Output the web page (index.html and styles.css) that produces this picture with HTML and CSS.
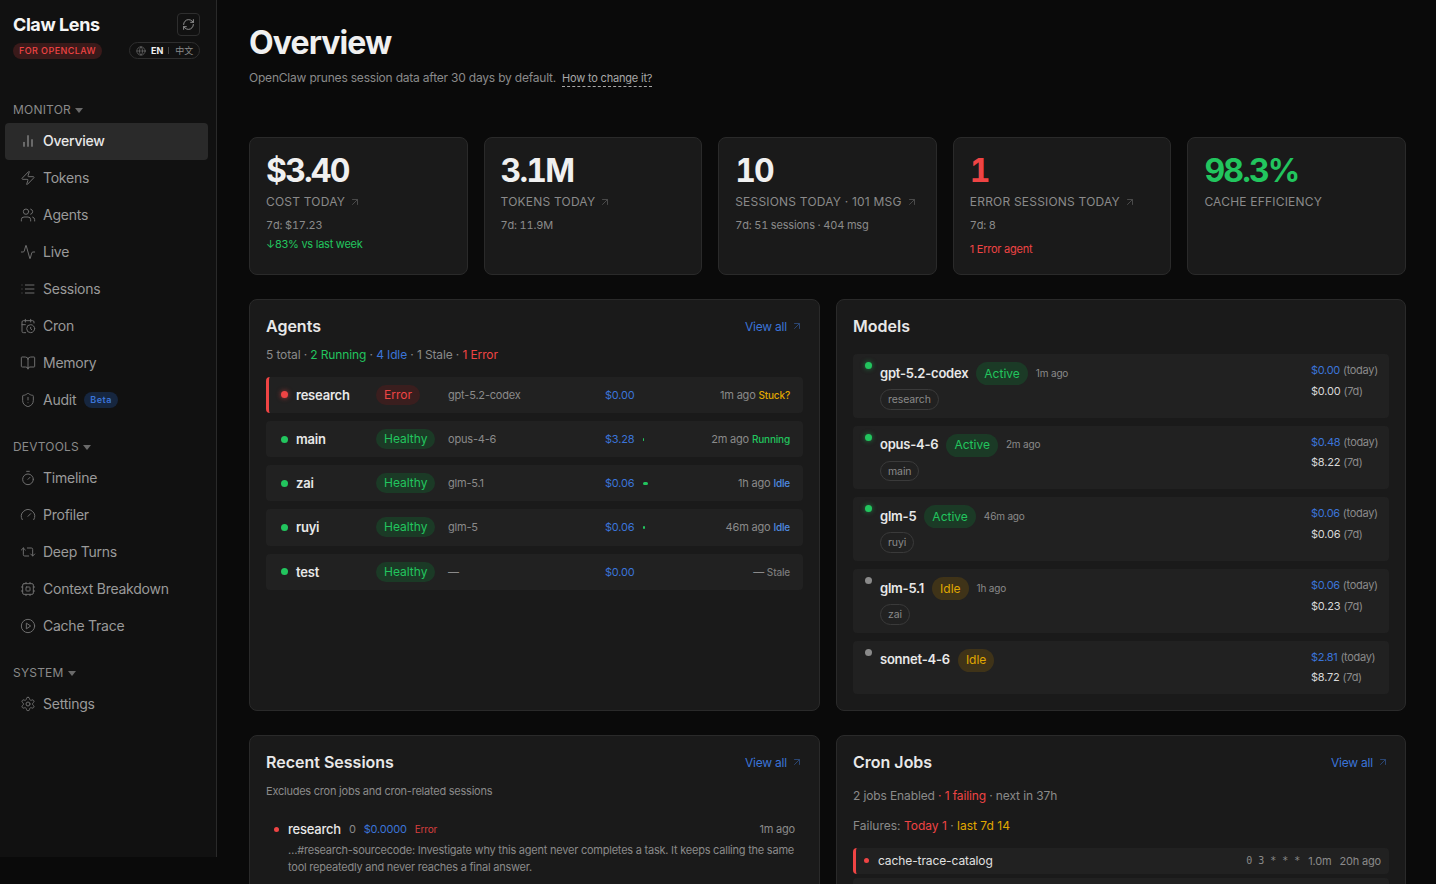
FILE: index.html
```html
<!DOCTYPE html>
<html lang="en">
<head>
<meta charset="utf-8">
<title>Claw Lens</title>
<link rel="stylesheet" href="styles.css">
</head>
<body>
<svg class="defs" aria-hidden="true">
  <symbol id="i-chart" viewBox="0 0 24 24"><path d="M18 20V10M12 20V4M6 20v-6"/></symbol>
  <symbol id="i-zap" viewBox="0 0 24 24"><path d="M4 14a1 1 0 0 1-.78-1.63l9.9-10.2a.5.5 0 0 1 .86.46l-1.92 6.02A1 1 0 0 0 13 10h7a1 1 0 0 1 .78 1.63l-9.9 10.2a.5.5 0 0 1-.86-.46l1.92-6.02A1 1 0 0 0 11 14z"/></symbol>
  <symbol id="i-users" viewBox="0 0 24 24"><path d="M16 21v-2a4 4 0 0 0-4-4H6a4 4 0 0 0-4 4v2"/><circle cx="9" cy="7" r="4"/><path d="M22 21v-2a4 4 0 0 0-3-3.87M16 3.13a4 4 0 0 1 0 7.75"/></symbol>
  <symbol id="i-activity" viewBox="0 0 24 24"><path d="M22 12h-2.48a2 2 0 0 0-1.93 1.46l-2.35 8.36a.25.25 0 0 1-.48 0L9.24 2.18a.25.25 0 0 0-.48 0l-2.35 8.36A2 2 0 0 1 4.49 12H2"/></symbol>
  <symbol id="i-list" viewBox="0 0 24 24"><path d="M3 12h.01M3 18h.01M3 6h.01M8 12h13M8 18h13M8 6h13"/></symbol>
  <symbol id="i-cal" viewBox="0 0 24 24"><path d="M21 7.5V6a2 2 0 0 0-2-2H5a2 2 0 0 0-2 2v14a2 2 0 0 0 2 2h3.5M16 2v4M8 2v4M3 10h5M17.5 17.5 16 16.3V14"/><circle cx="16" cy="16" r="6"/></symbol>
  <symbol id="i-book" viewBox="0 0 24 24"><path d="M12 7v14M3 18a1 1 0 0 1-1-1V4a1 1 0 0 1 1-1h5a4 4 0 0 1 4 4 4 4 0 0 1 4-4h5a1 1 0 0 1 1 1v13a1 1 0 0 1-1 1h-6a3 3 0 0 0-3 3 3 3 0 0 0-3-3z"/></symbol>
  <symbol id="i-shield" viewBox="0 0 24 24"><path d="M20 13c0 5-3.5 7.5-7.66 8.95a1 1 0 0 1-.67-.01C7.5 20.5 4 18 4 13V6a1 1 0 0 1 1-1c2 0 4.5-1.2 6.24-2.72a1.17 1.17 0 0 1 1.52 0C14.51 3.81 17 5 19 5a1 1 0 0 1 1 1zM12 8v4M12 16h.01"/></symbol>
  <symbol id="i-timer" viewBox="0 0 24 24"><path d="M10 2h4M12 14l3-3"/><circle cx="12" cy="14" r="8"/></symbol>
  <symbol id="i-gauge" viewBox="0 0 24 24"><path d="m12 14 4-4M3.34 19a10 10 0 1 1 17.32 0"/></symbol>
  <symbol id="i-repeat" viewBox="0 0 24 24"><path d="m2 9 3-3 3 3M13 18H7a2 2 0 0 1-2-2V6M22 15l-3 3-3-3M11 6h6a2 2 0 0 1 2 2v10"/></symbol>
  <symbol id="i-cpu" viewBox="0 0 24 24"><rect x="4" y="4" width="16" height="16" rx="2"/><rect x="9" y="9" width="6" height="6" rx="1"/><path d="M15 2v2M15 20v2M2 15h2M2 9h2M20 15h2M20 9h2M9 2v2M9 20v2"/></symbol>
  <symbol id="i-play" viewBox="0 0 24 24"><circle cx="12" cy="12" r="10"/><path d="M10 8l6 4-6 4z"/></symbol>
  <symbol id="i-gear" viewBox="0 0 24 24"><path d="M12.22 2h-.44a2 2 0 0 0-2 2v.18a2 2 0 0 1-1 1.73l-.43.25a2 2 0 0 1-2 0l-.15-.08a2 2 0 0 0-2.73.73l-.22.38a2 2 0 0 0 .73 2.73l.15.1a2 2 0 0 1 1 1.72v.51a2 2 0 0 1-1 1.74l-.15.09a2 2 0 0 0-.73 2.73l.22.38a2 2 0 0 0 2.73.73l.15-.08a2 2 0 0 1 2 0l.43.25a2 2 0 0 1 1 1.73V20a2 2 0 0 0 2 2h.44a2 2 0 0 0 2-2v-.18a2 2 0 0 1 1-1.73l.43-.25a2 2 0 0 1 2 0l.15.08a2 2 0 0 0 2.73-.73l.22-.39a2 2 0 0 0-.73-2.73l-.15-.08a2 2 0 0 1-1-1.74v-.5a2 2 0 0 1 1-1.74l.15-.09a2 2 0 0 0 .73-2.73l-.22-.38a2 2 0 0 0-2.73-.73l-.15.08a2 2 0 0 1-2 0l-.43-.25a2 2 0 0 1-1-1.73V4a2 2 0 0 0-2-2z"/><circle cx="12" cy="12" r="3"/></symbol>
  <symbol id="i-refresh" viewBox="0 0 24 24"><path d="M3 12a9 9 0 0 1 9-9 9.75 9.75 0 0 1 6.74 2.74L21 8M21 3v5h-5M21 12a9 9 0 0 1-9 9 9.75 9.75 0 0 1-6.74-2.74L3 16M8 16H3v5"/></symbol>
  <symbol id="i-globe" viewBox="0 0 24 24"><circle cx="12" cy="12" r="10"/><path d="M12 2a14.5 14.5 0 0 0 0 20 14.5 14.5 0 0 0 0-20M2 12h20"/></symbol>
  <symbol id="i-arrow" viewBox="0 0 24 24"><path d="M7 7h10v10M7 17 17 7"/></symbol>
</svg>
<div class="app">
  <aside class="sidebar">
    <div class="brand">
      <div class="brand-top">
        <span class="brand-name">Claw Lens</span>
        <button class="refresh"><svg class="ico ico-refresh"><use href="#i-refresh"/></svg></button>
      </div>
      <div class="brand-bottom">
        <span class="brand-tag">FOR OPENCLAW</span>
        <span class="lang"><svg class="ico ico-globe"><use href="#i-globe"/></svg><b>EN</b><i></i><span class="lang-zh">中文</span></span>
      </div>
    </div>
    <div class="nav-head nav-head-first">MONITOR<span class="caret"></span></div>
    <a class="nav active"><svg class="ico"><use href="#i-chart"/></svg>Overview</a>
    <a class="nav"><svg class="ico"><use href="#i-zap"/></svg>Tokens</a>
    <a class="nav"><svg class="ico"><use href="#i-users"/></svg>Agents</a>
    <a class="nav"><svg class="ico"><use href="#i-activity"/></svg>Live</a>
    <a class="nav"><svg class="ico"><use href="#i-list"/></svg>Sessions</a>
    <a class="nav"><svg class="ico"><use href="#i-cal"/></svg>Cron</a>
    <a class="nav"><svg class="ico"><use href="#i-book"/></svg>Memory</a>
    <a class="nav"><svg class="ico"><use href="#i-shield"/></svg>Audit<span class="beta">Beta</span></a>
    <div class="nav-head">DEVTOOLS<span class="caret"></span></div>
    <a class="nav"><svg class="ico"><use href="#i-timer"/></svg>Timeline</a>
    <a class="nav"><svg class="ico"><use href="#i-gauge"/></svg>Profiler</a>
    <a class="nav"><svg class="ico"><use href="#i-repeat"/></svg>Deep Turns</a>
    <a class="nav"><svg class="ico"><use href="#i-cpu"/></svg>Context Breakdown</a>
    <a class="nav"><svg class="ico"><use href="#i-play"/></svg>Cache Trace</a>
    <div class="nav-head">SYSTEM<span class="caret"></span></div>
    <a class="nav"><svg class="ico"><use href="#i-gear"/></svg>Settings</a>
  </aside>

  <main class="main">
    <h1>Overview</h1>
    <p class="subtitle">OpenClaw prunes session data after 30 days by default.<a class="help">How to change it?</a></p>

    <section class="stats">
      <div class="stat">
        <div class="stat-value">$3.40</div>
        <div class="stat-label">COST TODAY<svg class="ico-arrow"><use href="#i-arrow"/></svg></div>
        <div class="stat-sub">7d: $17.23</div>
        <div class="stat-delta green">↓83% vs last week</div>
      </div>
      <div class="stat">
        <div class="stat-value">3.1M</div>
        <div class="stat-label">TOKENS TODAY<svg class="ico-arrow"><use href="#i-arrow"/></svg></div>
        <div class="stat-sub">7d: 11.9M</div>
      </div>
      <div class="stat">
        <div class="stat-value">10</div>
        <div class="stat-label">SESSIONS TODAY · 101 MSG<svg class="ico-arrow"><use href="#i-arrow"/></svg></div>
        <div class="stat-sub">7d: 51 sessions · 404 msg</div>
      </div>
      <div class="stat">
        <div class="stat-value red">1</div>
        <div class="stat-label">ERROR SESSIONS TODAY<svg class="ico-arrow"><use href="#i-arrow"/></svg></div>
        <div class="stat-sub">7d: 8</div>
        <div class="stat-delta stat-delta-gap red">1 Error agent</div>
      </div>
      <div class="stat">
        <div class="stat-value green">98.3%</div>
        <div class="stat-label">CACHE EFFICIENCY</div>
      </div>
    </section>

    <section class="panels">
      <div class="panel panel-tall">
        <div class="panel-head"><h2>Agents</h2><a class="view-all">View all<svg class="ico-arrow"><use href="#i-arrow"/></svg></a></div>
        <div class="summary summary-agents">5 total · <span class="green">2 Running</span> · <span class="blue">4 Idle</span> · 1 Stale · <span class="red">1 Error</span></div>
        <div class="agents">
          <div class="agent agent-error">
            <span class="dot dot-red glow-red"></span><span class="agent-name">research</span>
            <span class="agent-pill"><span class="pill pill-red">Error</span></span>
            <span class="agent-model">gpt-5.2-codex</span><span class="agent-cost">$0.00</span>
            <span class="agent-bar"></span>
            <span class="agent-time">1m ago <b class="amber">Stuck?</b></span>
          </div>
          <div class="agent">
            <span class="dot dot-green"></span><span class="agent-name">main</span>
            <span class="agent-pill"><span class="pill pill-green">Healthy</span></span>
            <span class="agent-model">opus-4-6</span><span class="agent-cost">$3.28</span>
            <span class="agent-bar"><span class="bar bar-1"></span></span>
            <span class="agent-time">2m ago <b class="green">Running</b></span>
          </div>
          <div class="agent">
            <span class="dot dot-green"></span><span class="agent-name">zai</span>
            <span class="agent-pill"><span class="pill pill-green">Healthy</span></span>
            <span class="agent-model">glm-5.1</span><span class="agent-cost">$0.06</span>
            <span class="agent-bar"><span class="bar bar-5"></span></span>
            <span class="agent-time">1h ago <b class="blue-soft">Idle</b></span>
          </div>
          <div class="agent">
            <span class="dot dot-green"></span><span class="agent-name">ruyi</span>
            <span class="agent-pill"><span class="pill pill-green">Healthy</span></span>
            <span class="agent-model">glm-5</span><span class="agent-cost">$0.06</span>
            <span class="agent-bar"><span class="bar bar-2"></span></span>
            <span class="agent-time">46m ago <b class="blue-soft">Idle</b></span>
          </div>
          <div class="agent">
            <span class="dot dot-green"></span><span class="agent-name">test</span>
            <span class="agent-pill"><span class="pill pill-green">Healthy</span></span>
            <span class="agent-model">—</span><span class="agent-cost">$0.00</span>
            <span class="agent-bar"></span>
            <span class="agent-time">— <b class="stale">Stale</b></span>
          </div>
        </div>
      </div>

      <div class="panel panel-tall">
        <div class="panel-head"><h2>Models</h2></div>
        <div class="models">
          <div class="model">
            <span class="dot dot-green glow-green"></span>
            <div class="model-main">
              <div class="model-line"><span class="model-name">gpt-5.2-codex</span><span class="pill pill-lg pill-green">Active</span><span class="model-ago">1m ago</span></div>
              <span class="chip">research</span>
            </div>
            <div class="model-cost"><div><span class="blue">$0.00</span> <span class="muted">(today)</span></div><div>$0.00 <span class="muted">(7d)</span></div></div>
          </div>
          <div class="model">
            <span class="dot dot-green glow-green"></span>
            <div class="model-main">
              <div class="model-line"><span class="model-name">opus-4-6</span><span class="pill pill-lg pill-green">Active</span><span class="model-ago">2m ago</span></div>
              <span class="chip">main</span>
            </div>
            <div class="model-cost"><div><span class="blue">$0.48</span> <span class="muted">(today)</span></div><div>$8.22 <span class="muted">(7d)</span></div></div>
          </div>
          <div class="model">
            <span class="dot dot-green glow-green"></span>
            <div class="model-main">
              <div class="model-line"><span class="model-name">glm-5</span><span class="pill pill-lg pill-green">Active</span><span class="model-ago">46m ago</span></div>
              <span class="chip">ruyi</span>
            </div>
            <div class="model-cost"><div><span class="blue">$0.06</span> <span class="muted">(today)</span></div><div>$0.06 <span class="muted">(7d)</span></div></div>
          </div>
          <div class="model">
            <span class="dot dot-gray"></span>
            <div class="model-main">
              <div class="model-line"><span class="model-name">glm-5.1</span><span class="pill pill-lg pill-amber">Idle</span><span class="model-ago">1h ago</span></div>
              <span class="chip">zai</span>
            </div>
            <div class="model-cost"><div><span class="blue">$0.06</span> <span class="muted">(today)</span></div><div>$0.23 <span class="muted">(7d)</span></div></div>
          </div>
          <div class="model">
            <span class="dot dot-gray"></span>
            <div class="model-main">
              <div class="model-line"><span class="model-name">sonnet-4-6</span><span class="pill pill-lg pill-amber">Idle</span></div>
            </div>
            <div class="model-cost"><div><span class="blue">$2.81</span> <span class="muted">(today)</span></div><div>$8.72 <span class="muted">(7d)</span></div></div>
          </div>
        </div>
      </div>

      <div class="panel">
        <div class="panel-head"><h2>Recent Sessions</h2><a class="view-all">View all<svg class="ico-arrow"><use href="#i-arrow"/></svg></a></div>
        <div class="summary-small">Excludes cron jobs and cron-related sessions</div>
        <div class="session">
          <div class="session-line">
            <span class="dot dot-small dot-red"></span>
            <span class="session-name">research</span><span class="session-count">0</span><span class="session-cost">$0.0000</span><span class="session-err">Error</span>
            <span class="session-time">1m ago</span>
          </div>
          <p class="session-text">…#research-sourcecode: Investigate why this agent never completes a task. It keeps calling the same tool repeatedly and never reaches a final answer.</p>
        </div>
      </div>

      <div class="panel">
        <div class="panel-head"><h2>Cron Jobs</h2><a class="view-all">View all<svg class="ico-arrow"><use href="#i-arrow"/></svg></a></div>
        <div class="summary summary-cron">2 jobs Enabled <span class="red">· 1 failing</span> · next in 37h</div>
        <div class="summary summary-fail">Failures: <span class="red">Today 1</span> · <span class="amber">last 7d 14</span></div>
        <div class="cron cron-error">
          <span class="dot dot-small dot-red"></span><span class="cron-name">cache-trace-catalog</span>
          <span class="cron-sched">0 3 * * *</span><span class="cron-dur">1.0m</span><span class="cron-ago">20h ago</span>
        </div>
        <div class="cron"></div>
      </div>
    </section>
  </main>
</div>
</body>
</html>
```

FILE: styles.css
```css
* { box-sizing: border-box; letter-spacing: -0.017em; }
html, body { margin: 0; height: 884px; overflow: hidden; }
body {
  background: #0a0a0a;
  color: #e8e8e8;
  font-family: Inter, "Noto Sans CJK SC", sans-serif;
  font-size: 12px;
}
.defs { display: none; }
.app { display: flex; align-items: flex-start; height: 884px; }

/* sidebar */
.sidebar {
  flex: 0 0 217px;
  height: 857px;
  background: #111111;
  border-right: 1px solid #2a2a2a;
  padding: 0 8px 0 5px;
}
.brand { padding: 13px 8px 0 8px; height: 87px; }
.brand-top { display: flex; justify-content: space-between; align-items: center; height: 23px; }
.brand-name { font-size: 18px; font-weight: 700; color: #f5f5f5; letter-spacing: -0.42px; }
.refresh {
  width: 23px; height: 23px; padding: 0;
  display: flex; align-items: center; justify-content: center;
  background: transparent;
  border: 1px solid #2e2e2e;
  border-radius: 4px;
}
.brand-bottom { display: flex; justify-content: space-between; align-items: center; margin-top: 6px; height: 17px; }
.brand-tag {
  display: inline-flex; align-items: center; height: 16px;
  padding: 0 6px 1px;
  border-radius: 8px;
  background: #3a1a1a;
  color: #ef4444;
  font-size: 9px; font-weight: 500; letter-spacing: 0.42px;
}
.lang {
  display: inline-flex; align-items: center; height: 17px; width: 71px;
  padding: 0 6px;
  border: 1px solid #2e2e2e;
  border-radius: 9px;
  color: #8a8a8a;
  font-size: 9px;
  white-space: nowrap;
}
.lang b { color: #f0f0f0; font-weight: 700; margin-left: 5px; letter-spacing: 0; }
.lang i { flex: none; width: 1px; height: 7px; background: #444; margin: 0 6px 0 5px; }
.lang-zh { letter-spacing: 0; }
.ico { width: 16px; height: 16px; flex: none; fill: none; stroke: #6e6e6e; stroke-width: 1.5; stroke-linecap: round; stroke-linejoin: round; }
.ico-refresh { width: 13px; height: 13px; stroke: #a0a0a0; stroke-width: 1.6; }
.ico-globe { width: 10px; height: 10px; stroke: #777; }

.nav-head {
  display: flex; align-items: center;
  padding: 20px 0 5px 8px;
  color: #8a8a8a;
  font-size: 12px; line-height: 16px; letter-spacing: 0.2px;
}
.nav-head-first { padding-top: 15px; }
.caret {
  width: 0; height: 0; margin-left: 4px;
  border-left: 4px solid transparent;
  border-right: 4px solid transparent;
  border-top: 5px solid #6a6a6a;
}
.nav {
  display: flex; align-items: center; gap: 7px;
  height: 37px;
  padding: 0 0 2px 15px;
  border-radius: 4px;
  color: #9a9a9a;
  font-size: 14px;
}
.nav.active { background: #2a2a2a; color: #e8e8e8; font-weight: 500; }
.nav.active .ico { stroke: #a8a8a8; }
.beta {
  margin-left: 1px;
  padding: 0 6px;
  height: 16px; line-height: 16px;
  border-radius: 8px;
  background: #16263f;
  color: #3b74d8;
  font-size: 9px; font-weight: 600; letter-spacing: 0.5px;
}

/* main */
.main { flex: 1; min-width: 0; padding: 25px 30px 0 32px; }
h1 { margin: 0; font-size: 32px; line-height: 36px; font-weight: 700; color: #f0f0f0; letter-spacing: -0.9px; }
.subtitle { margin: 8px 0 0; color: #8a8a8a; font-size: 12px; line-height: 18px; }
.help {
  margin-left: 6px;
  color: #a8a8a8; font-size: 11px;
  border-bottom: 1px dashed #a8a8a8;
  padding-bottom: 1px;
}

.stats {
  display: grid; grid-template-columns: repeat(5, 1fr); gap: 16px;
  margin-top: 50px;
}
.stat {
  height: 138px;
  padding: 15px 16px;
  background: #1a1a1a;
  border: 1px solid #2a2a2a;
  border-radius: 8px;
}
.stat-value {
  font-size: 32px; line-height: 36px; font-weight: 700; color: #f0f0f0;
  letter-spacing: -1.8px;
  font-variant-numeric: tabular-nums;
}
.stat-value.red { color: #ef4444; }
.stat-value.green { color: #22c55e; }
.stat-label {
  display: flex; align-items: center;
  margin-top: 5px;
  color: #8a8a8a; font-size: 12px; line-height: 16px; letter-spacing: 0.2px;
  white-space: nowrap;
}
.stat-sub { margin-top: 7px; color: #8a8a8a; font-size: 11px; line-height: 16px; font-variant-numeric: tabular-nums; }
.stat-delta { margin-top: 3px; font-size: 11px; line-height: 16px; letter-spacing: -0.25px; }
.stat-delta-gap { margin-top: 8px; }
.ico-arrow { width: 12px; height: 12px; margin-left: 4px; flex: none; fill: none; stroke: #4a4a4a; stroke-width: 2; stroke-linecap: round; stroke-linejoin: round; }

.green { color: #22c55e; }
.red { color: #ef4444; }
.blue { color: #3b74d8; }
.blue-soft { color: #4f8ae0; }
.amber { color: #e0a800; }
.muted { color: #8a8a8a; }
.stale { color: #7a7a7a; font-weight: 500; }

.panels { display: grid; grid-template-columns: 571px 570px; gap: 24px 16px; margin-top: 24px; }
.panel {
  background: #1a1a1a;
  border: 1px solid #2a2a2a;
  border-radius: 8px;
  padding: 16px;
  height: 300px;
}
.panel-tall { height: 412px; }
.panel-head { display: flex; justify-content: space-between; align-items: center; height: 20px; }
h2 { margin: 0; font-size: 16px; line-height: 20px; font-weight: 600; color: #e8e8e8; letter-spacing: 0; }
.view-all { display: flex; align-items: center; color: #3b74d8; font-size: 12px; }
.view-all .ico-arrow { stroke: #2b4672; }
.summary { color: #8a8a8a; font-size: 12px; line-height: 18px; letter-spacing: -0.12px; }
.summary span { letter-spacing: -0.12px; }
.summary-agents { margin-top: 10px; }
.summary-small { margin-top: 11px; color: #8a8a8a; font-size: 11px; line-height: 16px; letter-spacing: -0.23px; }
.summary-cron { margin-top: 15px; }
.summary-fail { margin-top: 12px; letter-spacing: 0; }
.summary-fail span { letter-spacing: 0; }

/* agents */
.agents { display: flex; flex-direction: column; gap: 8px; margin-top: 12.75px; }
.agent {
  display: flex; align-items: center;
  height: 36.2px;
  padding: 0 13px 0 15px;
  background: #212121;
  border-radius: 4px;
  font-size: 11px;
}
.agent-error { border-left: 3px solid #ef4444; padding-left: 12px; }
.dot { flex: none; display: block; width: 7px; height: 7px; border-radius: 50%; }
.dot-red { background: #ef4444; }
.dot-green { background: #22c55e; }
.dot-gray { background: #8a8a8a; }
.dot-small { width: 5px; height: 5px; }
.glow-red { box-shadow: 0 0 5px rgba(239, 68, 68, .7); }
.glow-green { box-shadow: 0 0 5px rgba(34, 197, 94, .6); }
.agent-name { width: 80px; margin-left: 8px; font-size: 13px; font-weight: 600; color: #e8e8e8; }
.agent-pill { width: 72px; display: flex; }
.pill {
  display: inline-flex; align-items: center;
  height: 20px; padding: 0 8px 1px;
  border-radius: 10px;
  font-size: 12px;
  letter-spacing: 0;
}
.pill-lg { height: 23px; border-radius: 12px; padding-bottom: 1px; }
.pill-red { background: #3a1e1e; color: #ef4444; }
.pill-green { background: #1b3a26; color: #22c55e; }
.pill-amber { background: #3f3318; color: #e0a800; }
.agent-model { width: 157px; color: #8a8a8a; font-size: 11px; }
.agent-cost { width: 38px; color: #3b74d8; font-size: 11px; }
.agent-bar { width: 40px; display: flex; align-items: center; }
.bar { display: block; height: 3px; background: #22c55e; border-radius: 2px; }
.bar-1 { width: 1px; }
.bar-2 { width: 2px; }
.bar-5 { width: 5px; }
.agent-time { flex: 1; text-align: right; color: #8a8a8a; font-size: 11px; white-space: nowrap; }
.agent-time b { font-size: 10px; font-weight: 500; }

/* models */
.models { display: flex; flex-direction: column; gap: 8px; margin-top: 18px; }
.model {
  display: flex; align-items: flex-start;
  padding: 8px 12px;
  background: #212121;
  border-radius: 4px;
}
.model-main { flex: 1; margin-left: 8px; min-width: 0; }
.model-line { display: flex; align-items: center; gap: 8px; height: 23px; }
.model-name { font-size: 13px; font-weight: 600; color: #e8e8e8; padding-bottom: 2px; }
.model-ago { color: #8a8a8a; font-size: 10px; padding-bottom: 2px; }
.chip {
  display: inline-flex; align-items: center;
  height: 20.7px; margin-top: 4px; padding: 0 7px;
  border: 1px solid #3a3a3a;
  border-radius: 11px;
  color: #8a8a8a; font-size: 10.5px; letter-spacing: -0.1px;
}
.model-cost { width: 66px; height: 37px; color: #d8d8d8; font-size: 11px; line-height: 17.5px; white-space: nowrap; letter-spacing: -0.3px; }
.model-cost span { letter-spacing: -0.3px; }
.model-cost div + div { margin-top: 3px; }

/* sessions */
.session { margin-top: 20px; padding-left: 8px; }
.session-line { display: flex; align-items: center; height: 20px; padding-right: 8px; }
.session-name { margin-left: 9px; font-size: 13px; font-weight: 500; color: #e8e8e8; }
.session-count { margin-left: 8px; color: #8a8a8a; font-size: 11px; }
.session-cost { margin-left: 8px; color: #3b74d8; font-size: 11px; }
.session-err { margin-left: 8px; color: #d93f3f; font-size: 10px; }
.session-time { margin-left: auto; color: #8a8a8a; font-size: 11px; }
.session-text { margin: 3px 0 0 14px; color: #8a8a8a; font-size: 11px; line-height: 17px; letter-spacing: -0.23px; }

/* cron */
.cron {
  display: flex; align-items: center;
  height: 26px; margin-top: 4px;
  padding: 0 8px 1px 11px;
  background: #212121;
  border-radius: 4px;
  color: #8a8a8a; font-size: 11px;
}
.cron-error { margin-top: 13px; border-left: 3px solid #ef4444; padding-left: 8px; }
.cron-name { margin-left: 9px; color: #e0e0e0; font-size: 12px; letter-spacing: -0.1px; }
.cron-sched { margin-left: auto; font-family: "DejaVu Sans Mono", "Liberation Mono", monospace; font-size: 10px; letter-spacing: 0; }
.cron-dur { margin-left: 8px; }
.cron-ago { margin-left: 8px; }
```
